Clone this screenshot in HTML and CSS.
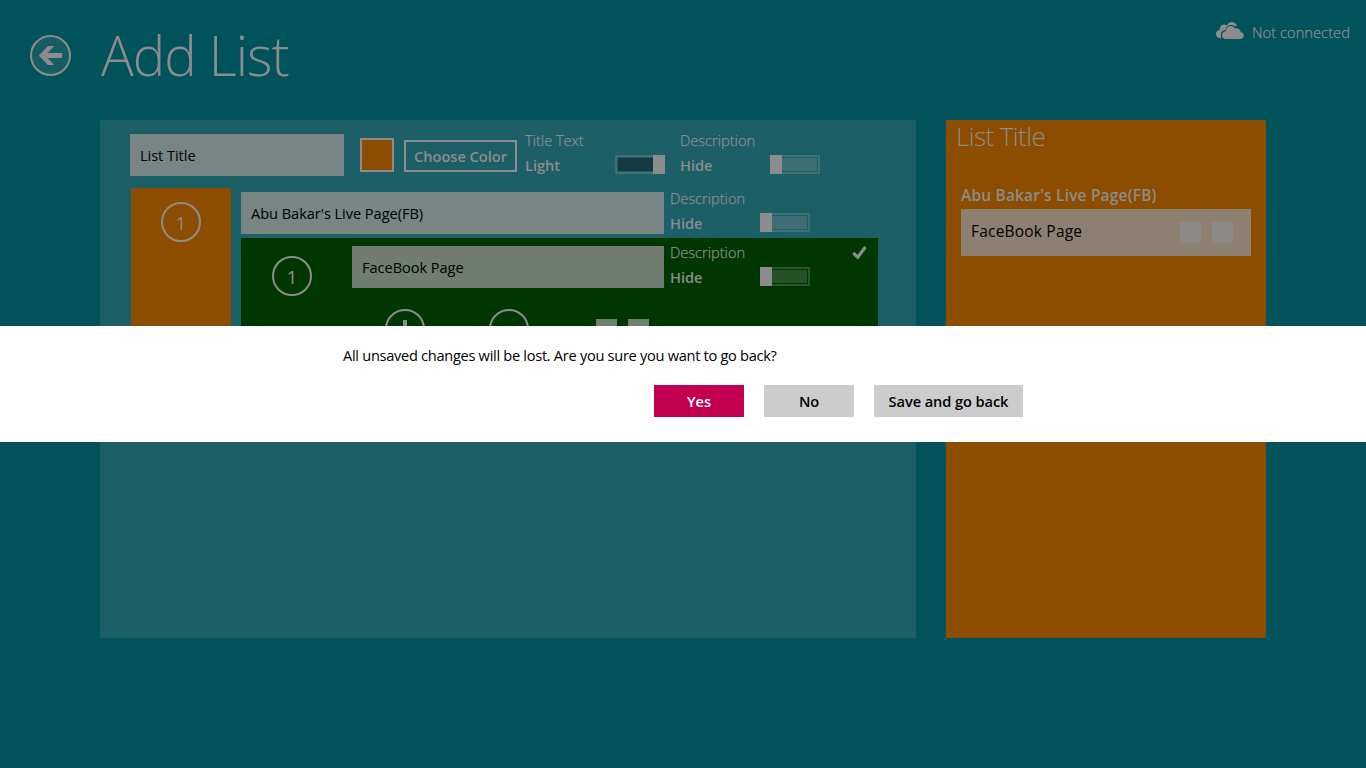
FILE: index.html
```html
<!DOCTYPE html>
<html lang="en">
<head>
<meta charset="utf-8">
<title>Add List</title>
<link rel="stylesheet" href="styles.css">
</head>
<body>
<div class="app">
  <header class="header">
    <svg class="back" width="42" height="42" viewBox="0 0 42 42"><circle class="back-ring" cx="20.5" cy="20.5" r="19.5"/><path class="fill" d="M8.7 20.5 18 11h6.2l-6.6 7H32v5H17.6l6.6 7H18z"/></svg>
    <h1 class="title">Add List</h1>
    <div class="status">
      <svg width="28" height="18" viewBox="0 0 28 18"><path class="fill" d="M5.2 16.2C2 16.3 0 14.600 0 12c0-2.500 1.700-4 3.700-4.300C3.800 4.500 6 2.600 8.500 2.600c.9 0 1.600.2 2.300.6C12.200 1.100 14 0 16 0c2.500 0 4.500 1.700 5.100 4.200-1-.2-1.700-.1-2.500.1-1.200-1-2.500-1.500-3.900-1.300-3 .2-5 2.300-5.300 5-2.700.3-4.600 2-4.600 4.900 0 1.300.1 2.300.4 3.300z"/><path class="fill" d="M9.900 17C7.600 17 6 15.400 6 13.200c0-2.200 1.500-3.800 3.900-3.900 0-3.100 2.100-5.200 4.900-5.200 1.900 0 3.300.9 4.200 2.300 3.100-.9 5.600 1 5.700 3.900 1.900.1 3.100 1.500 3.100 3.300S26.400 17 24.400 17z"/></svg>
      <span class="status-text">Not connected</span>
    </div>
  </header>
  <main class="content">
    <section class="editor">
      <div class="settings">
        <div class="field list-field">List Title</div>
        <div class="swatch"></div>
        <div class="choose">Choose Color</div>
        <div class="toggle"><span class="label">Title Text</span><b class="value">Light</b><span class="switch on"><i class="track"></i><i class="thumb"></i></span></div>
        <div class="toggle last"><span class="label">Description</span><b class="value">Hide</b><span class="switch"><i class="thumb"></i><i class="track"></i></span></div>
      </div>
      <div class="group">
        <div class="group-side"><div class="ring">1</div></div>
        <div class="group-body">
          <div class="group-head">
            <div class="field name-field">Abu Bakar's Live Page(FB)</div>
            <div class="toggle"><span class="label">Description</span><b class="value">Hide</b><span class="switch"><i class="thumb"></i><i class="track"></i></span></div>
          </div>
          <div class="item">
            <div class="item-head">
              <div class="ring item-ring">1</div>
              <div class="field item-field">FaceBook Page</div>
              <div class="toggle"><span class="label">Description</span><b class="value">Hide</b><span class="switch"><i class="thumb"></i><i class="track"></i></span></div>
              <svg class="check" width="15" height="14" viewBox="0 0 15 14"><path d="M1.300 7 5.800 11.200 13.400 1"/></svg>
            </div>
            <div class="actions">
              <div class="ring add"><i class="plus"></i></div>
              <div class="ring"></div>
              <div class="square first"></div>
              <div class="square"></div>
            </div>
          </div>
        </div>
      </div>
    </section>
    <aside class="preview">
      <h2 class="preview-title">List Title</h2>
      <h3 class="preview-group">Abu Bakar's Live Page(FB)</h3>
      <div class="preview-item"><span class="preview-name">FaceBook Page</span><i class="tile"></i><i class="tile"></i></div>
    </aside>
  </main>
  <div class="dialog" role="dialog">
    <p class="message">All unsaved changes will be lost. Are you sure you want to go back?</p>
    <div class="buttons"><button class="btn primary">Yes</button><button class="btn">No</button><button class="btn wide">Save and go back</button></div>
  </div>
</div>
</body>
</html>
```
FILE: styles.css
```css
* { box-sizing: border-box; }
body { margin: 0; background: #00525b; color: #8c8c8c; font: 400 14.600px/20px "Open Sans", "Noto Sans", sans-serif; }
h1, h2, h3, p { margin: 0; }
.app { position: relative; width: 1366px; height: 768px; overflow: hidden; }
.fill { fill: #8c8c8c; }
.header { display: flex; height: 120px; padding: 0 16px 0 30px; }
.back { margin-top: 35px; }
.back-ring { fill: #165c64; stroke: #8c8c8c; stroke-width: 2; }
.title { margin: 15px 0 0 29px; font-size: 54.500px; line-height: 80px; font-weight: 300; letter-spacing: -1px; white-space: nowrap; }
.status { display: flex; margin: 22px 0 0 auto; }
.status-text { margin-left: 8px; width: 98px; white-space: nowrap; font-weight: 300; letter-spacing: .07px; -webkit-text-stroke: .25px #8c8c8c; }
.content { display: flex; gap: 30px; height: 518px; padding-left: 100px; }
.editor { width: 816px; background: #1d5f66; padding: 14px 0 0 30px; }
.settings { display: flex; height: 54px; }
.field { display: flex; align-items: center; height: 42px; padding: 0 10px 1px; background: #778585; color: #000; white-space: nowrap; letter-spacing: -.05px; flex: none; }
.list-field { width: 214px; }
.swatch { width: 34px; height: 34px; margin: 4px 10px 0 16px; background: #8c4d00; border: 2px solid #8c8c8c; }
.choose { display: flex; align-items: center; justify-content: center; width: 113px; height: 32px; margin: 6px 8px 0 0; border: 2px solid #8c8c8c; font-weight: 600; white-space: nowrap; }
.toggle { display: grid; grid-template-columns: 90px 50px; grid-template-rows: 20px 25px; align-items: center; width: 140px; margin-top: -4px; height: 45px; flex: none; }
.last { margin-left: 15px; }
.label { grid-column: 1 / 3; font-weight: 300; -webkit-text-stroke: .25px #8c8c8c; }
.value { font-weight: 600; padding-top: 5px; }
.switch { display: flex; width: 50px; height: 19px; margin-top: 4px; border: 2px solid #426f74; align-items: center; }
.thumb { width: 12px; height: 19px; background: #8c8c8c; margin: 0 0 0 -2px; flex: none; }
.track { width: 35px; height: 13px; background: #3d6e73; flex: none; }
.on .track { background: #143941; margin-left: 1px; }
.on .thumb { margin: 0; }
.group { display: flex; gap: 10px; height: 230px; padding-left: 1px; }
.group-side { width: 100px; background: #8c4d00; padding: 14px 30px; }
.ring { display: flex; align-items: center; justify-content: center; width: 40px; height: 40px; border: 2px solid #8c8c8c; border-radius: 50%; font-size: 19px; padding-top: 1px; flex: none; }
.group-body { width: 637px; }
.group-head { display: flex; gap: 6px; height: 50px; padding-top: 4px; }
.name-field { width: 423px; }
.item { background: #003700; height: 180px; padding-top: 8px; }
.item .switch { border-color: #2f532f; }
.item .track { background: #265026; }
.item-head { display: flex; height: 63px; padding-left: 31px; }
.item-ring { margin-top: 10px; }
.item-field { width: 312px; margin: 0 6px 0 40px; background: #707d70; }
.check { margin-left: 42px; fill: none; stroke: #8c8c8c; stroke-width: 3.200; }
.actions { display: flex; padding-left: 144px; gap: 11px; }
.add { margin-right: 53px; align-items: flex-start; padding-top: 9px; }
.plus { width: 4px; height: 18px; background: #8c8c8c; }
.square { width: 21px; height: 21px; margin-top: 10px; background: #707d70; }
.first { margin-left: 56px; }
.preview { width: 320px; background: #8c4d00; padding: 0 15px; }
.preview-title { height: 65px; margin-left: -5px; font-size: 26px; line-height: 33px; font-weight: 300; letter-spacing: -.6px; white-space: nowrap; }
.preview-group { font-size: 15.500px; line-height: 20px; height: 24px; font-weight: 600; letter-spacing: .18px; white-space: nowrap; }
.preview-item { display: flex; align-items: center; gap: 11px; width: 290px; height: 47px; padding: 0 18px 0 10px; background: #8c8070; color: #000; }
.preview-name { margin-right: auto; padding-bottom: 3px; font-size: 15.500px; letter-spacing: .2px; white-space: nowrap; }
.tile { width: 21px; height: 21px; background: #8c8885; }
.dialog { position: absolute; left: 0; top: 326px; width: 1366px; height: 116px; padding: 19px 343px 0; background: #fff; color: #000; }
.message { height: 40px; letter-spacing: -.29px; white-space: nowrap; }
.buttons { display: flex; justify-content: flex-end; gap: 20px; }
.btn { width: 90px; height: 32px; border: 0; padding: 0; background: #ccc; color: #000; font: 600 14.600px/20px "Open Sans", "Noto Sans", sans-serif; letter-spacing: -.08px; white-space: nowrap; }
.wide { width: 149px; }
.primary { background: #c3004f; color: #fff; }
```
